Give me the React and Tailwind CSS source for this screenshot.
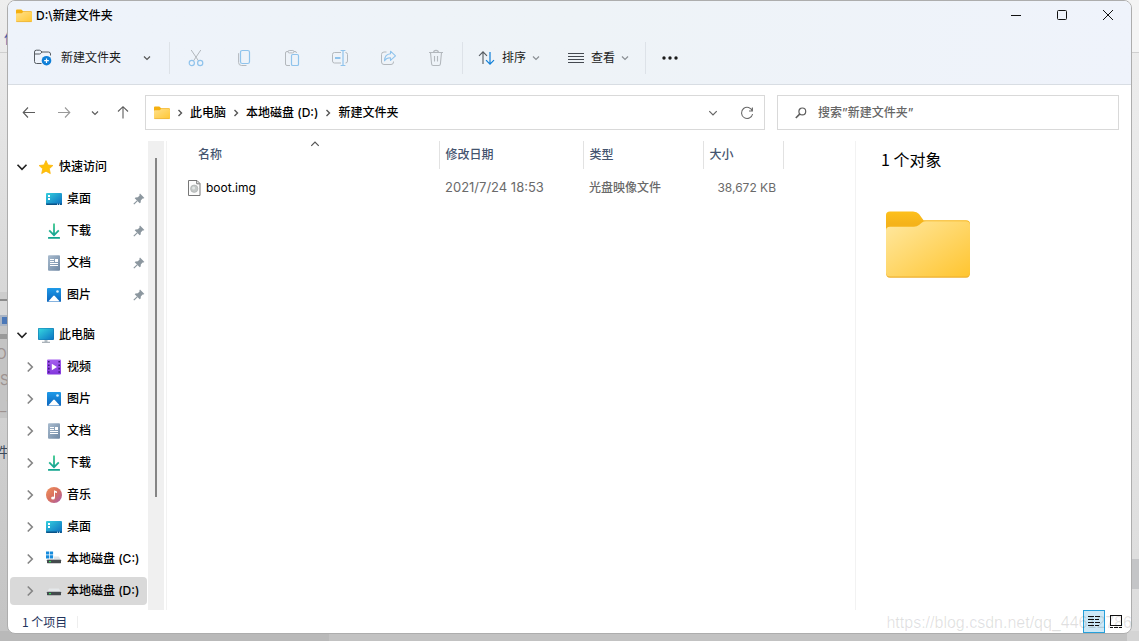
import React from "react";

/* ---------- small shared glyphs ---------- */

function Chevron({ dir = "down", size = 8, className = "", stroke = 1.2 }) {
  const paths = {
    down: "M1 2.5 L4 5.5 L7 2.5",
    up: "M1 5.5 L4 2.5 L7 5.5",
    right: "M2.5 1 L5.5 4 L2.5 7",
  };
  return (
    <svg width={size} height={size} viewBox="0 0 8 8" fill="none" stroke="currentColor" strokeWidth={stroke} className={className} aria-hidden="true">
      <path d={paths[dir]} />
    </svg>
  );
}

function FolderIcon() {
  return (
    <svg width="16" height="16" viewBox="0 0 16 16" aria-hidden="true">
      <defs>
        <linearGradient id="smallFolder" x1="0" y1="0" x2="1" y2="1">
          <stop offset="0" stopColor="#ffe08a" />
          <stop offset="1" stopColor="#ffc733" />
        </linearGradient>
      </defs>
      <path d="M0 2.5 Q0 1.5 1 1.5 H5.3 L7.2 3.2 H15 Q16 3.2 16 4.2 V8 H0Z" fill="#f5b010" />
      <path d="M0 6 Q0 5.2 1 5.2 H5.6 L7.2 4 H15 Q16 4 16 5 V13 Q16 14 15 14 H1 Q0 14 0 13Z" fill="url(#smallFolder)" />
      <path d="M0.3 13.6 H15.7" stroke="#eab03a" strokeWidth="0.7" />
    </svg>
  );
}

function BigFolder() {
  return (
    <svg width="84" height="67" viewBox="0 0 84 67" role="img" aria-label="文件夹">
      <defs>
        <linearGradient id="bigFolder" x1="0" y1="0" x2="1" y2="1">
          <stop offset="0" stopColor="#ffe8a0" />
          <stop offset="1" stopColor="#ffc530" />
        </linearGradient>
        <linearGradient id="bigTab" x1="0" y1="0" x2="0" y2="1">
          <stop offset="0" stopColor="#fdc01c" />
          <stop offset="0.3" stopColor="#f5b31a" />
        </linearGradient>
      </defs>
      <path d="M0 4 Q0 0.5 4 0.5 H27 Q31 0.5 33 3 L37.5 9.3 H80 Q84 9.3 84 13 V40 H0Z" fill="url(#bigTab)" />
      <path d="M0 60 V62 Q0 66.7 4 66.7 H80 Q84 66.7 84 62 V60Z" fill="#eeb02e" />
      <path d="M0 19.5 Q0 15.8 4 15.8 H28 Q31 15.8 33 14 L36 11.5 Q37.5 10.3 40 10.3 H80 Q84 10.3 84 14 V61.5 Q84 65.5 80 65.5 H4 Q0 65.5 0 61.5Z" fill="url(#bigFolder)" />
    </svg>
  );
}

/* ---------- navigation pane icons ---------- */

function StarIcon() {
  return (
    <svg width="16" height="16" viewBox="0 0 16 16" aria-hidden="true">
      <path d="M8 1.6 L10 6 L14.9 6.5 L11.3 9.8 L12.3 14.6 L8 12.2 L3.7 14.6 L4.7 9.8 L1.1 6.5 L6 6Z" fill="#ffc107" stroke="#fbb50c" strokeWidth="0.8" strokeLinejoin="round" />
    </svg>
  );
}

function DesktopIcon() {
  return (
    <svg width="16" height="16" viewBox="0 0 16 16" aria-hidden="true">
      <defs>
        <linearGradient id="desk" x1="0" y1="0" x2="1" y2="1">
          <stop offset="0" stopColor="#35d0de" />
          <stop offset="1" stopColor="#0a6cc0" />
        </linearGradient>
      </defs>
      <rect y="2" width="16" height="12" rx="1" fill="url(#desk)" />
      <path d="M0 12.6H16V13Q16 14 15 14H1Q0 14 0 13Z" fill="#0a5387" />
      <path d="M2 4h2v2H2zM2 7h2v2H2z" fill="#fff" />
      <path d="M11 12.7h1v1h-1zM13 12.7h1v1h-1z" fill="#d6f0ff" />
    </svg>
  );
}

function DownloadIcon() {
  return (
    <svg width="16" height="16" viewBox="0 0 16 16" fill="none" aria-hidden="true">
      <defs>
        <linearGradient id="dl" gradientUnits="userSpaceOnUse" x1="0" y1="0" x2="0" y2="16">
          <stop offset="0" stopColor="#3cc98c" />
          <stop offset="1" stopColor="#0a9a96" />
        </linearGradient>
      </defs>
      <path d="M8 0.5V12M3.2 7.4L8 12.2L12.8 7.4" stroke="url(#dl)" strokeWidth="1.8" />
      <rect x="2" y="14" width="12" height="1.8" rx="0.6" fill="#12a58f" />
    </svg>
  );
}

function DocumentIcon() {
  return (
    <svg width="16" height="16" viewBox="0 0 16 16" aria-hidden="true">
      <defs>
        <linearGradient id="doc" x1="0" y1="0" x2="1" y2="1">
          <stop offset="0" stopColor="#a9bccf" />
          <stop offset="1" stopColor="#6d86a2" />
        </linearGradient>
      </defs>
      <rect x="2" y="0.3" width="12" height="15.4" rx="1" fill="url(#doc)" />
      <path d="M4 4.5h4M4 6.5h4M4 8.5h8M4 10.5h8" stroke="#fff" strokeWidth="1" />
      <path d="M9 4h3v3H9z" fill="#fff" />
    </svg>
  );
}

function PictureIcon() {
  return (
    <svg width="16" height="16" viewBox="0 0 16 16" aria-hidden="true">
      <defs>
        <linearGradient id="pic" x1="0" y1="0" x2="0" y2="1">
          <stop offset="0" stopColor="#1e9ae8" />
          <stop offset="1" stopColor="#0b65bd" />
        </linearGradient>
      </defs>
      <rect x="1" y="1" width="14" height="14" rx="1" fill="url(#pic)" />
      <path d="M2.2 14.6 L7.2 8.9 Q8 8.1 8.8 8.9 L13.8 14.6Z" fill="#fff" />
      <circle cx="11.5" cy="4.5" r="1.3" fill="#d8efff" />
    </svg>
  );
}

function ComputerIcon() {
  return (
    <svg width="16" height="16" viewBox="0 0 16 16" aria-hidden="true">
      <defs>
        <linearGradient id="pc" x1="0" y1="0" x2="1" y2="1">
          <stop offset="0" stopColor="#35d6df" />
          <stop offset="1" stopColor="#0b74c4" />
        </linearGradient>
      </defs>
      <rect y="1" width="16" height="12" rx="1" fill="#1377b0" />
      <rect x="0.6" y="1.6" width="14.8" height="10.8" rx="0.5" fill="url(#pc)" />
      <path d="M6.5 13h3v2h-3z" fill="#b9c1c8" />
      <path d="M4 14.8h8v0.9H4z" fill="#87939d" />
    </svg>
  );
}

function VideoIcon() {
  return (
    <svg width="16" height="16" viewBox="0 0 16 16" aria-hidden="true">
      <defs>
        <linearGradient id="vid" x1="0" y1="0" x2="0" y2="1">
          <stop offset="0" stopColor="#a55fee" />
          <stop offset="1" stopColor="#8337dd" />
        </linearGradient>
      </defs>
      <rect x="1" y="0.5" width="14" height="15" rx="1" fill="url(#vid)" />
      <path d="M2 2h1.6v1.6H2zM2 5.4h1.6V7H2zM2 8.8h1.6v1.6H2zM2 12.2h1.6v1.6H2zM12.4 2H14v1.6h-1.6zM12.4 5.4H14V7h-1.6zM12.4 8.8H14v1.6h-1.6zM12.4 12.2H14v1.6h-1.6z" fill="#41177e" />
      <path d="M5.8 4.8L11 8L5.8 11.2Z" fill="#fff" />
    </svg>
  );
}

function MusicIcon() {
  return (
    <svg width="16" height="16" viewBox="0 0 16 16" aria-hidden="true">
      <defs>
        <linearGradient id="mus" x1="0" y1="0" x2="1" y2="1">
          <stop offset="0" stopColor="#f0925c" />
          <stop offset="0.5" stopColor="#d8705f" />
          <stop offset="1" stopColor="#a65bb0" />
        </linearGradient>
      </defs>
      <circle cx="8" cy="8" r="8" fill="url(#mus)" />
      <ellipse cx="7" cy="11" rx="1.9" ry="1.6" fill="#fff" />
      <path d="M8 11V3.2L11 4.4V6L9 5.4V11Z" fill="#fff" />
    </svg>
  );
}

function DriveIcon({ system = false }) {
  return (
    <svg width="16" height="16" viewBox="0 0 16 16" aria-hidden="true">
      <path d="M3.2 5.5H12.8L15 9H1Z" fill={system ? "#dfe3e6" : "#e5e8ea"} />
      <rect x="1" y="8.8" width="14" height="3.4" rx="0.4" fill="#444a4d" />
      <rect x="3" y="10" width="2" height="1.2" fill="#35e05a" />
      {system && (
        <>
          <path d="M0 0h8v8H0z" fill="#fff" />
          <path d="M0 0.4h3.2v3.2H0zM3.9 0.4h3.2v3.2H3.9zM0 4.3h3.2v3.2H0zM3.9 4.3h3.2v3.2H3.9z" fill="#168bdc" />
        </>
      )}
    </svg>
  );
}

function PinIcon() {
  return (
    <svg width="12" height="12" viewBox="0 0 12 12" className="text-[#8c979f]" aria-hidden="true">
      <path d="M7 0.6L11.4 5L10.4 5.6L9.6 5.5L7.8 7.4L7.7 9.6L6.7 10.3L1.7 5.3L2.5 4.4L4.8 4.3L6.6 2.4L6.4 1.4Z" fill="currentColor" />
      <path d="M4.2 7.8L0.8 11.2" stroke="currentColor" strokeWidth="1.2" />
    </svg>
  );
}

function FileIcon() {
  return (
    <svg width="13" height="16" viewBox="0 0 13 16" fill="none" aria-hidden="true">
      <path d="M0.5 0.5H9L12 3.5V15.5H0.5Z" fill="#fcfcfc" stroke="#777" />
      <path d="M8.7 0.8V3.8H11.8" stroke="#777" />
      <circle cx="6.2" cy="8.7" r="3.7" fill="#c3c7c6" stroke="#a6aaa9" strokeWidth="0.6" />
      <circle cx="5.6" cy="8" r="1.5" fill="#e3e7e6" />
    </svg>
  );
}

/* ---------- command bar icons ---------- */

const GREY = "#b3b8bd";
const BLUE = "#8fc3ec";

function NewFolderIcon() {
  return (
    <svg width="18" height="17" viewBox="0 0 18 17" fill="none" aria-hidden="true">
      <path d="M7.5 14.5H2.5Q0.5 14.5 0.5 12.5V3Q0.5 1.2 2.3 1.2H5.4Q6.2 1.2 6.8 1.9L8 3H14.5Q16.5 3 16.5 5V6.5" stroke="#555a60" />
      <path d="M0.5 5H5.4Q6.2 5 6.8 4.4L8 3" stroke="#555a60" />
      <circle cx="12.5" cy="11.7" r="4.8" fill="#0f7fd8" />
      <path d="M12.5 9.4V14M10.2 11.7H14.8" stroke="#fff" strokeWidth="1.2" />
    </svg>
  );
}

function CutIcon() {
  return (
    <svg width="16" height="18" viewBox="0 0 16 18" fill="none" aria-hidden="true">
      <path d="M3.2 1L10.6 12M12.8 1L5.4 12" stroke={GREY} />
      <circle cx="3.8" cy="14" r="2.6" stroke={BLUE} strokeWidth="1.2" />
      <circle cx="12.2" cy="14" r="2.6" stroke={BLUE} strokeWidth="1.2" />
    </svg>
  );
}

function CopyIcon() {
  return (
    <svg width="16" height="18" viewBox="0 0 16 18" fill="none" aria-hidden="true">
      <path d="M2.6 4.2V13.5Q2.6 16.5 5.6 16.5H10.5" stroke={GREY} />
      <rect x="4.5" y="1.5" width="9" height="13" rx="1.8" stroke={BLUE} strokeWidth="1.2" />
    </svg>
  );
}

function PasteIcon() {
  return (
    <svg width="16" height="18" viewBox="0 0 16 18" fill="none" aria-hidden="true">
      <path d="M6 16.5H3Q1.5 16.5 1.5 15V4Q1.5 2.5 3 2.5H11Q12.5 2.5 12.5 4" stroke={GREY} />
      <rect x="4" y="1.5" width="6" height="2.4" rx="1.2" stroke={GREY} fill="#eff3fa" />
      <rect x="7.5" y="5.5" width="7" height="11" rx="1.3" stroke={BLUE} strokeWidth="1.2" />
    </svg>
  );
}

function RenameIcon() {
  return (
    <svg width="18" height="18" viewBox="0 0 18 18" fill="none" aria-hidden="true">
      <path d="M10 3.5H3.5Q1.5 3.5 1.5 5.5V12Q1.5 14 3.5 14H10M14.5 3.5Q16.5 3.5 16.5 5.5V12Q16.5 14 14.5 14" stroke={GREY} />
      <path d="M12 1.5V16.5M9.6 1.5H14.4M9.6 16.5H14.4" stroke={BLUE} strokeWidth="1.2" />
      <path d="M4 9H9.5" stroke={BLUE} strokeWidth="1.8" />
    </svg>
  );
}

function ShareIcon() {
  return (
    <svg width="17" height="18" viewBox="0 0 17 18" fill="none" aria-hidden="true">
      <path d="M6.5 3H4Q1.5 3 1.5 5.5V13Q1.5 15.5 4 15.5H11Q13.5 15.5 13.5 13V12.5" stroke={GREY} />
      <path d="M10.5 2.2L15.5 6.8L10.5 11.3V8.8Q6.5 8.6 4.5 11.8Q4.8 5.2 10.5 4.8Z" stroke={BLUE} strokeWidth="1.1" strokeLinejoin="round" />
    </svg>
  );
}

function TrashIcon() {
  return (
    <svg width="16" height="18" viewBox="0 0 16 18" fill="none" stroke={GREY} strokeWidth="1.1" aria-hidden="true">
      <path d="M1 3.5H15M5.6 3.5Q5.6 1.4 8 1.4Q10.4 1.4 10.4 3.5M2.5 3.5L3.6 15Q3.8 16.5 5.2 16.5H10.8Q12.2 16.5 12.4 15L13.5 3.5M6.5 7V12.5M9.5 7V12.5" />
    </svg>
  );
}

function SortIcon() {
  return (
    <svg width="17" height="16" viewBox="0 0 17 16" fill="none" aria-hidden="true">
      <path d="M5 14V2M1 5.8L5 1.8L9 5.8" stroke="#555a60" strokeWidth="1.1" />
      <path d="M12 2V14M8 10.2L12 14.2L16 10.2" stroke="#0f7fd8" strokeWidth="1.2" />
    </svg>
  );
}

function ViewIcon() {
  return (
    <svg width="16" height="12" viewBox="0 0 16 12" stroke="#444950" aria-hidden="true">
      <path d="M0 1.5H16M0 4.5H16M0 7.5H16M0 10.5H16" />
    </svg>
  );
}

function Arrow({ turn = "" }) {
  return (
    <svg width="14" height="13" viewBox="0 0 14 13" fill="none" stroke="currentColor" strokeWidth="1.1" className={turn} aria-hidden="true">
      <path d="M13 6.5H1.5M6 1.5L1.2 6.5L6 11.5" />
    </svg>
  );
}

/* ---------- data ---------- */

const quickAccess = [
  { label: "桌面", icon: <DesktopIcon /> },
  { label: "下载", icon: <DownloadIcon /> },
  { label: "文档", icon: <DocumentIcon /> },
  { label: "图片", icon: <PictureIcon /> },
];

const computer = [
  { label: "视频", icon: <VideoIcon /> },
  { label: "图片", icon: <PictureIcon /> },
  { label: "文档", icon: <DocumentIcon /> },
  { label: "下载", icon: <DownloadIcon /> },
  { label: "音乐", icon: <MusicIcon /> },
  { label: "桌面", icon: <DesktopIcon /> },
  { label: "本地磁盘 (C:)", icon: <DriveIcon system /> },
  { label: "本地磁盘 (D:)", icon: <DriveIcon />, selected: true },
];

const fileCommands = [
  { label: "剪切", icon: <CutIcon /> },
  { label: "复制", icon: <CopyIcon /> },
  { label: "粘贴", icon: <PasteIcon /> },
  { label: "重命名", icon: <RenameIcon /> },
  { label: "共享", icon: <ShareIcon /> },
  { label: "删除", icon: <TrashIcon /> },
];

/* ---------- parts ---------- */

function TitleBar() {
  return (
    <header className="flex h-[30px] items-center justify-between">
      <div className="flex items-center gap-1 pl-2">
        <FolderIcon />
        <h1 className="text-xs font-medium">D:\新建文件夹</h1>
      </div>
      <div className="flex h-7 self-start text-[#111]">
        <button aria-label="最小化" className="flex w-[46px] items-center justify-center">
          <svg width="10" height="10" viewBox="0 0 10 10" stroke="currentColor"><path d="M0 5.5H10" /></svg>
        </button>
        <button aria-label="最大化" className="flex w-[46px] items-center justify-center">
          <svg width="10" height="10" viewBox="0 0 10 10" fill="none" stroke="currentColor"><rect x="0.5" y="0.5" width="9" height="9" rx="1" /></svg>
        </button>
        <button aria-label="关闭" className="flex w-[46px] items-center justify-center">
          <svg width="10" height="10" viewBox="0 0 10 10" stroke="currentColor"><path d="M0 0L10 10M10 0L0 10" /></svg>
        </button>
      </div>
    </header>
  );
}

function Divider() {
  return <div className="h-8 w-px bg-[#dde2e8]" />;
}

function CommandBar() {
  return (
    <div className="flex h-[54px] items-center border-b border-[#d8dde3] pl-[26px] text-xs text-[#1b1b1b]">
      <button className="flex w-[135px] items-center">
        <NewFolderIcon />
        <span className="ml-[9px]">新建文件夹</span>
        <Chevron className="ml-[22px] text-[#555]" />
      </button>
      <Divider />
      <div className="flex px-[2px]">
        {fileCommands.map((c) => (
          <button key={c.label} aria-label={c.label} disabled className="flex h-8 w-12 items-center justify-center">
            {c.icon}
          </button>
        ))}
      </div>
      <Divider />
      <button className="ml-[15px] flex items-center">
        <SortIcon />
        <span className="ml-[7px]">排序</span>
        <Chevron className="ml-[6px] text-[#8a8f94]" />
      </button>
      <button className="mr-[16px] ml-[28px] flex items-center">
        <ViewIcon />
        <span className="ml-[7px]">查看</span>
        <Chevron className="ml-[6px] text-[#8a8f94]" />
      </button>
      <Divider />
      <button aria-label="更多" className="flex h-8 w-12 items-center justify-center">
        <svg width="16" height="4" viewBox="0 0 16 4" fill="#1b1b1b"><circle cx="2" cy="2" r="1.7" /><circle cx="8" cy="2" r="1.7" /><circle cx="14" cy="2" r="1.7" /></svg>
      </button>
    </div>
  );
}

function AddressRow() {
  return (
    <div className="flex h-14 items-start pt-[10px] pr-3 pl-1">
      <div className="flex h-[35px] text-[#5c5c5c]">
        <button aria-label="后退" className="flex w-[34px] items-center justify-center"><Arrow /></button>
        <button aria-label="前进" className="flex w-[36px] items-center justify-center text-[#999]"><Arrow turn="rotate-180" /></button>
        <button aria-label="最近" className="flex w-[26px] items-center justify-center"><Chevron /></button>
        <button aria-label="向上" className="flex w-[30px] items-center justify-center"><Arrow turn="rotate-90" /></button>
      </div>
      <div className="ml-[7px] flex h-[35px] flex-1 items-center border border-[#d9d9d9] pl-2">
        <FolderIcon />
        <nav aria-label="路径" className="flex flex-1 items-center text-xs font-medium">
          {["此电脑", "本地磁盘 (D:)", "新建文件夹"].map((p) => (
            <React.Fragment key={p}>
              <span className="flex w-5 justify-center"><Chevron dir="right" stroke={1.4} className="text-[#555]" /></span>
              <a href="#">{p}</a>
            </React.Fragment>
          ))}
        </nav>
        <button aria-label="展开地址" className="flex w-[34px] justify-center text-[#666]"><Chevron size={10} stroke={1} /></button>
        <button aria-label="刷新" className="flex w-[34px] justify-center">
          <svg width="14" height="14" viewBox="0 0 14 14" fill="none" stroke="#6a6a6a" strokeWidth="1.1"><path d="M12.4 5A5.6 5.6 0 1 0 12.6 8M12.4 1.5V5H9" /></svg>
        </button>
      </div>
      <label className="ml-3 flex h-[35px] w-[342px] items-center border border-[#d9d9d9] pl-[17px]">
        <svg width="12" height="12" viewBox="0 0 12 12" fill="none" stroke="#5c5c5c" strokeWidth="1.2" aria-hidden="true"><circle cx="7.3" cy="4.4" r="3.4" /><path d="M4.9 6.9L0.8 11" strokeWidth="1.6" /></svg>
        <input aria-label="搜索" placeholder="搜索”新建文件夹”" className="ml-[11px] flex-1 bg-transparent text-xs font-medium outline-none placeholder:text-[#666]" />
      </label>
    </div>
  );
}

function TreeRow({ label, icon, root, open, pinned, selected }) {
  return (
    <li>
      <a href="#" className={`flex h-7 items-center rounded-sm pr-[2px] ${root ? "pl-1" : "pl-3"} ${selected ? "bg-[#d9d9d9]" : ""}`}>
        <span className="flex w-4 justify-center">
          {!pinned && <Chevron dir={open ? "down" : "right"} size={12} stroke={1.1} className={open ? "text-[#222]" : "text-[#858585]"} />}
        </span>
        <span className="ml-2">{icon}</span>
        <span className="ml-[5px] flex-1 whitespace-nowrap">{label}</span>
        {pinned && <PinIcon />}
      </a>
    </li>
  );
}

function Sidebar() {
  return (
    <aside className="flex w-[159px] shrink-0 border-r border-[#f2f2f2]">
      <nav aria-label="导航窗格" className="flex w-[140px] flex-col gap-3 pt-3 pr-px pl-[2px] text-xs font-medium">
        <ul className="flex flex-col gap-1">
          <TreeRow root open label="快速访问" icon={<StarIcon />} />
          {quickAccess.map((i) => <TreeRow key={i.label} pinned {...i} />)}
        </ul>
        <ul className="flex flex-col gap-1">
          <TreeRow root open label="此电脑" icon={<ComputerIcon />} />
          {computer.map((i) => <TreeRow key={i.label} {...i} />)}
        </ul>
      </nav>
      <div className="flex w-4 justify-center bg-[#f0f0f0] pt-[17px]">
        <div className="h-[339px] w-[2px] bg-[#858585]" />
      </div>
    </aside>
  );
}

function FileList() {
  return (
    <main className="min-w-0 flex-1">
      <table className="table-fixed border-collapse text-left text-xs">
        <colgroup>
          <col className="w-[272px]" />
          <col className="w-[144px]" />
          <col className="w-[120px]" />
          <col className="w-[80px]" />
        </colgroup>
        <thead className="text-[#44546f]">
          <tr className="h-7">
            <th className="relative border-r border-[#e2e2e2] p-0 pl-[31px] font-medium">
              名称
              <Chevron dir="up" size={10} stroke={1} className="absolute top-[-2px] left-[143px] text-[#555]" />
            </th>
            <th className="border-r border-[#e2e2e2] p-0 pl-[6px] font-medium">修改日期</th>
            <th className="border-r border-[#e2e2e2] p-0 pl-[6px] font-medium">类型</th>
            <th className="border-r border-[#e2e2e2] p-0 pl-[6px] font-medium">大小</th>
          </tr>
        </thead>
        <tbody className="text-[#6a6a6a]">
          <tr className="h-[38px]">
            <td className="p-0 pl-[21px]">
              <span className="flex items-center gap-[5px] text-black"><FileIcon />boot.img</span>
            </td>
            <td className="p-0 pl-[6px] text-[13px]">2021/7/24 18:53</td>
            <td className="p-0 pl-[6px] font-medium">光盘映像文件</td>
            <td className="p-0 pr-[7px] text-right">38,672 KB</td>
          </tr>
        </tbody>
      </table>
    </main>
  );
}

function StatusBar() {
  return (
    <footer className="flex h-[23px] items-center pl-[14px] text-xs text-[#1f335c]">
      <span className="font-['Noto_Sans_CJK_SC',sans-serif]">1 个项目</span>
      <div className="ml-[10px] h-3 w-px bg-[#eee]" />
      <div className="ml-auto flex h-full items-center pr-[9px]">
        <button aria-label="详细信息" className="flex h-full w-[22px] items-center justify-center border border-[#26a0da] bg-[#cce8f6]">
          <svg width="12" height="11" viewBox="0 0 12 11" stroke="#111"><path d="M0 0.5H6M7 0.5H12M0 3.5H6M7 3.5H11M0 6.5H6M7 6.5H12M0 9.5H6M7 9.5H11" /></svg>
        </button>
        <button aria-label="大图标" className="ml-[5px]">
          <svg width="12" height="13" viewBox="0 0 12 13" fill="none" stroke="#111"><rect x="0.5" y="0.5" width="11" height="10" /><path d="M0 12.5H3M4 12.5H8M9 12.5H12" /></svg>
        </button>
      </div>
    </footer>
  );
}

/* Parts of the page behind the window that show at its edges. */
function Backdrop() {
  return (
    <div aria-hidden="true" className="absolute inset-0 flex flex-col overflow-hidden bg-[#c0c0c0] text-sm">
      <div className="flex flex-1 justify-between">
        <div className="w-6 overflow-hidden bg-linear-to-b from-[#eeeeee] via-[#d6d6d6] to-[#c4c4c4]">
          <div className="h-[53px] border-b border-[#cfcfcf] pt-7 pl-1 text-[#4a62a8]">件</div>
          <div className="mt-[239px] h-[7px] bg-[#cccccc]" />
          <div className="h-[2px] bg-[#8c8c8c]" />
          <div className="h-[14px] bg-[#d8d8d8]" />
          <div className="h-[11px] border-2 border-[#a9b4c4] bg-[#4b78b8]" />
          <div className="h-[8px] bg-[#c5c5c5]" />
          <div className="h-[5px] bg-[#9a9a9a]" />
          <div className="h-[79px] bg-[#c4c4c4] pt-[2px] leading-[26px] text-[#9c9290]">
            <div className="-ml-1">O</div><div>S</div><div>_7</div>
          </div>
          <div className="mt-6 -ml-[5px] text-[#3b4a5c]">件</div>
        </div>
        <div className="w-4 bg-linear-to-b from-[#eeeeee] to-[#dcdcdc]">
          <div className="h-[53px] border-b border-[#cfcfcf] bg-[#f4f4f4]" />
          <div className="mt-[506px] h-[30px] bg-[#c4c5c7]" />
        </div>
      </div>
      <div className="flex h-[10px]">
        <div className="w-[329px] bg-[#b9b9b9]" />
        <div className="flex-1 bg-[#c2c2c2]" />
        <div className="w-3 bg-[#d4d4d4]" />
      </div>
    </div>
  );
}

export default function App() {
  return (
    <div className="relative flex min-h-screen flex-col font-['Inter','Noto_Sans_CJK_SC',sans-serif] text-black">
      <Backdrop />
      <div className="relative mx-[7px] mb-[7px] flex flex-1 flex-col overflow-hidden rounded-lg border border-[#adadad] bg-white">
        <div className="bg-linear-to-r from-[#eef3fb] via-[#eef3f7] to-[#eff3fb]">
          <TitleBar />
          <CommandBar />
        </div>
        <AddressRow />
        <div className="flex flex-1">
          <Sidebar />
          <FileList />
          <section aria-label="预览" className="w-[276px] shrink-0 border-l border-[#f2f2f2] pt-[6px] pl-[25px]">
            <h2 className="font-['Noto_Sans_CJK_SC',sans-serif] text-base">1 个对象</h2>
            <div className="mt-10 ml-[5px]"><BigFolder /></div>
          </section>
        </div>
        <StatusBar />
      </div>
      <div className="pointer-events-none absolute right-[7px] bottom-[6px] font-['Liberation_Sans',sans-serif] text-base text-black/12">
        https://blog.csdn.net/qq_44612786
      </div>
    </div>
  );
}
